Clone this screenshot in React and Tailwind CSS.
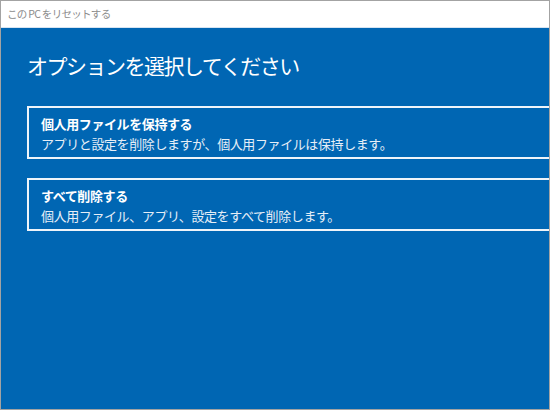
import React from 'react'

const options = [
  { title: '個人用ファイルを保持する', desc: 'アプリと設定を削除しますが、個人用ファイルは保持します。' },
  { title: 'すべて削除する', desc: '個人用ファイル、アプリ、設定をすべて削除します。' },
]

const App = () => {
  return (
    <div
      className="w-[550px] h-[410px] border border-[#a3a3a3] flex flex-col overflow-hidden"
      style={{ fontFamily: '"Noto Sans CJK JP", "Noto Sans", sans-serif' }}
    >
      <div className="h-[27px] bg-white border-b border-[#d6e4f2] flex items-center pl-[6px] text-[10.5px] text-[#8c8c8c] tracking-[-0.7px] whitespace-pre">
        この PC をリセットする
      </div>
      <div className="flex-1 bg-[#0066b3] pl-[26px] pt-[22px]">
        <h1 className="text-[21px] leading-[30px] text-white tracking-[-1.5px] font-normal">
          オプションを選択してください
        </h1>
        <div className="mt-[26px] flex flex-col gap-[19px]">
          {options.map((o) => (
            <div key={o.title} className="border-2 border-r-0 border-[#eef4fa] pl-[12px] pt-[6px] pb-[3px] text-white">
              <div className="text-[13px] leading-[20px] font-bold tracking-[-0.4px]">{o.title}</div>
              <div className="text-[13px] leading-[20px] text-[#e6eef7] tracking-[-0.4px]">{o.desc}</div>
            </div>
          ))}
        </div>
      </div>
    </div>
  )
}

export default App
